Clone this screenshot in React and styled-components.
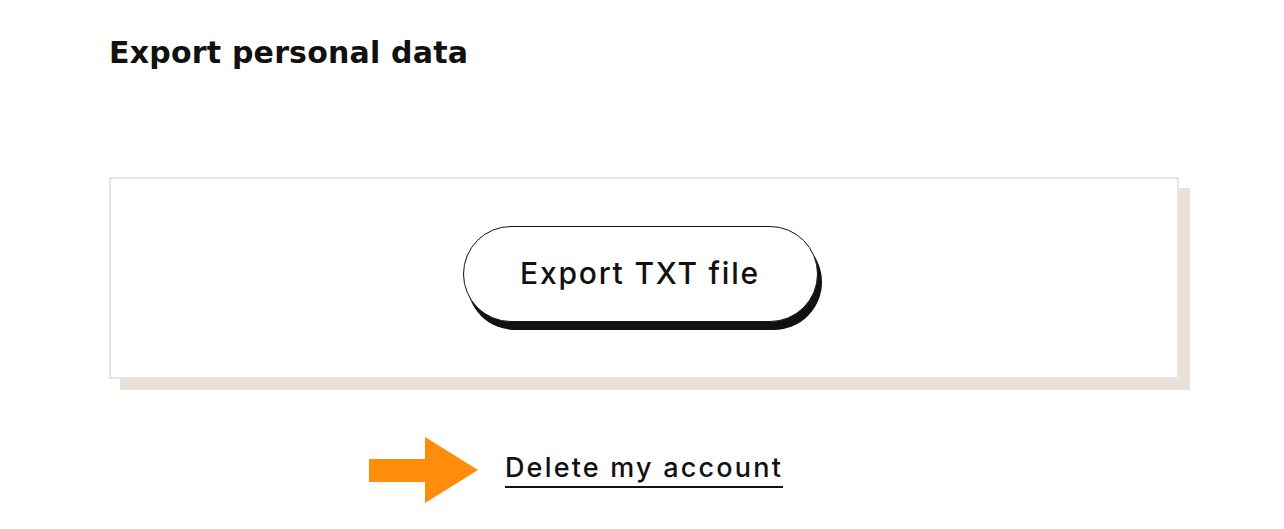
import React from "react";
import styled, { createGlobalStyle } from "styled-components";

const GlobalStyle = createGlobalStyle`
  body {
    margin: 0;
    background: #ffffff;
    font-family: Inter, "DejaVu Sans", sans-serif;
    color: #111111;
  }
`;

const Page = styled.div`
  padding: 31px 0 0 109px;
  width: 1081px;
  min-height: 529px;
  box-sizing: border-box;
`;

const Title = styled.h2`
  margin: 0;
  font-family: "DejaVu Sans", Inter, sans-serif;
  font-size: 30px;
  font-weight: 700;
  line-height: 44px;
  letter-spacing: 0.2px;
`;

const Card = styled.div`
  margin-top: 102px;
  width: 1070px;
  height: 202px;
  box-sizing: border-box;
  border: 2px solid #e6e6e6;
  background: #ffffff;
  box-shadow: 11px 11px 0 #e8e2d9;
  display: flex;
  align-items: center;
  justify-content: center;
  padding-bottom: 8px;
`;

const PillButton = styled.button`
  width: 355px;
  height: 96px;
  border: 1.5px solid #111111;
  border-radius: 48px;
  background: #ffffff;
  box-shadow: 4px 8px 0 #111111;
  font-family: Inter, "DejaVu Sans", sans-serif;
  font-size: 30px;
  font-weight: 500;
  letter-spacing: 1.8px;
  color: #111111;
  cursor: pointer;
  margin-left: -8px;
  padding: 0 0 2px;
`;

const LinkRow = styled.div`
  margin-top: 72px;
  display: flex;
  justify-content: center;
  width: 1070px;
`;

const LinkWrap = styled.div`
  position: relative;
`;

const DeleteLink = styled.a`
  font-size: 27px;
  font-weight: 500;
  letter-spacing: 2.2px;
  color: #111111;
  text-decoration: none;
  border-bottom: 2px solid #111111;
  padding-bottom: 2px;
  line-height: 33px;
  display: inline-block;
`;

const Arrow = styled.svg`
  display: block;
  position: absolute;
  right: calc(100% + 26px);
  top: -14px;
`;

export default function App() {
  return (
    <>
      <GlobalStyle />
      <Page>
        <Title>Export personal data</Title>
        <Card>
          <PillButton>Export TXT file</PillButton>
        </Card>
        <LinkRow>
          <LinkWrap>
            <Arrow width="110" height="66" viewBox="0 0 110 66">
              <polygon
                points="0,22 56,22 56,0 109,33 56,66 56,45 0,45"
                fill="#ff8c0a"
              />
            </Arrow>
            <DeleteLink href="#">Delete my account</DeleteLink>
          </LinkWrap>
        </LinkRow>
      </Page>
    </>
  );
}
